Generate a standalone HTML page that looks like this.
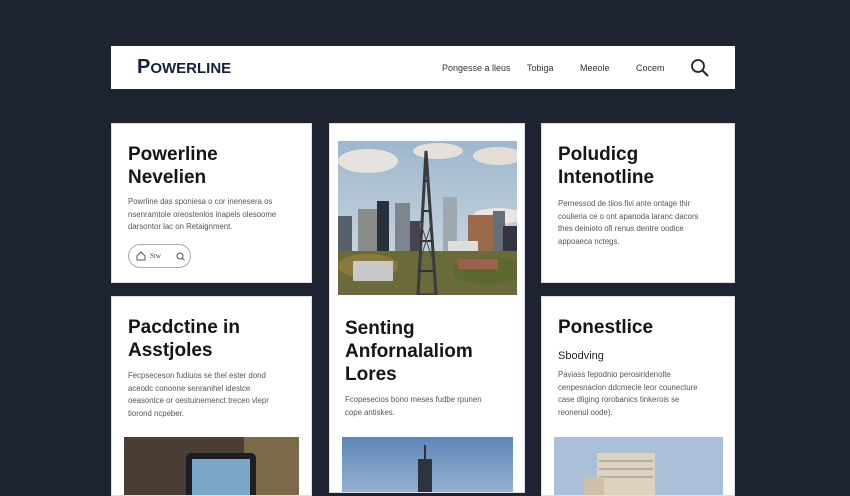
<!DOCTYPE html>
<html><head><meta charset="utf-8"><style>
*{margin:0;padding:0;box-sizing:border-box}
body{width:850px;height:486px;overflow:hidden;background:#1d2330;font-family:"Liberation Sans",sans-serif;position:relative}
.card{position:absolute;background:#fff;border:1px solid #dde;overflow:hidden}
.nav{position:absolute;left:111px;top:46px;width:624px;height:43px;background:#fff}
.logo{position:absolute;left:26px;top:10px;font-size:20px;font-weight:bold;color:#14213a}
.logo span{font-size:15px}
.links{position:absolute;top:17px;font-size:9px;color:#333}
h2{position:absolute;font-size:19px;line-height:23px;color:#151515;font-weight:bold}
p{position:absolute;font-size:7.8px;line-height:12.5px;color:#555;white-space:nowrap}
</style></head><body>
<div class="nav">
 <div class="logo">P<span>OWERLINE</span></div>
 <div class="links" style="left:331px">Pongesse a  lleus</div>
 <div class="links" style="left:416px">Tobiga</div>
 <div class="links" style="left:469px">Meeole</div>
 <div class="links" style="left:525px">Cocem</div>
 <svg style="position:absolute;left:579px;top:12px" width="20" height="20" viewBox="0 0 20 20"><circle cx="8" cy="8" r="6" fill="none" stroke="#222" stroke-width="1.8"/><path d="M12.5 12.5L18 18" stroke="#222" stroke-width="2"/></svg>
</div>

<div class="card" style="left:111px;top:123px;width:201px;height:160px">
 <h2 style="left:16px;top:19px">Powerline<br>Nevelien</h2>
 <p style="left:16px;top:72px">Powrline das sponiesa o cor inenesera os<br>nsenramtole oreostenlos inapels olesoome<br>darsontor lac on Retaignment.</p>
 <div style="position:absolute;left:16px;top:120px;width:63px;height:24px;border:1px solid #aaa;border-radius:12px;font-size:7px;color:#444">
  <svg style="position:absolute;left:7px;top:6px" width="10" height="10" viewBox="0 0 10 10"><path d="M1 9V5L5 1 9 5V9Z" fill="none" stroke="#555"/></svg>
  <span style="position:absolute;left:21px;top:7px;font-family:'Liberation Serif',serif">Stw</span>
  <svg style="position:absolute;left:47px;top:7px" width="9" height="9" viewBox="0 0 9 9"><circle cx="4" cy="4" r="3" fill="none" stroke="#555"/><path d="M6 6L8.5 8.5" stroke="#555"/></svg>
 </div>
</div>

<div class="card" style="left:329px;top:123px;width:196px;height:370px">
 <svg style="position:absolute;left:8px;top:17px" width="179" height="154" viewBox="0 0 179 154">
  <defs><linearGradient id="s" x1="0" y1="0" x2="0" y2="1"><stop offset="0" stop-color="#9db7cf"/><stop offset="1" stop-color="#d6dde0"/></linearGradient></defs>
  <rect width="179" height="154" fill="url(#s)"/>
  <ellipse cx="30" cy="20" rx="30" ry="12" fill="#e8e2dc"/><ellipse cx="100" cy="10" rx="25" ry="8" fill="#e6e0da"/><ellipse cx="160" cy="15" rx="25" ry="9" fill="#e4ddd6"/><ellipse cx="160" cy="75" rx="25" ry="8" fill="#e9e5e0"/>
  <rect x="0" y="75" width="14" height="50" fill="#56606b"/><rect x="20" y="68" width="20" height="60" fill="#8a8c8a"/><rect x="39" y="60" width="12" height="60" fill="#27303c"/><rect x="57" y="62" width="15" height="60" fill="#7c8590"/><rect x="72" y="80" width="10" height="40" fill="#445"/><rect x="105" y="56" width="14" height="60" fill="#a0a8b2"/><rect x="130" y="74" width="28" height="50" fill="#9a6a4a"/><rect x="155" y="70" width="12" height="55" fill="#666e78"/><rect x="165" y="85" width="14" height="40" fill="#334"/><rect x="110" y="100" width="30" height="25" fill="#ddd"/>
  <rect x="0" y="110" width="179" height="44" fill="#6b6a3a"/>
  <ellipse cx="30" cy="125" rx="30" ry="12" fill="#8a7a3a"/><ellipse cx="150" cy="130" rx="35" ry="14" fill="#5c6a30"/><rect x="15" y="120" width="40" height="20" fill="#c8c8c8"/><rect x="120" y="118" width="40" height="10" fill="#a06050"/>
  <path d="M88 10L80 154H98Z" fill="none" stroke="#3a3a3a" stroke-width="3"/><path d="M86 40L90 40M84 70L92 70M82 100L95 100M81 130L97 130" stroke="#333" stroke-width="2"/><path d="M82 80L95 120M94 80L82 120" stroke="#444"/>
 </svg>
 <h2 style="left:15px;top:193px">Senting<br>Anfornalaliom<br>Lores</h2>
 <p style="left:15px;top:270px">Fcopesecios bono meses fudbe rpunen<br>cope antiskes.</p>
 <svg style="position:absolute;left:12px;top:313px" width="171" height="60" viewBox="0 0 171 60"><defs><linearGradient id="b" x1="0" y1="0" x2="0" y2="1"><stop offset="0" stop-color="#5c86b8"/><stop offset="1" stop-color="#9ab6d2"/></linearGradient></defs><rect width="171" height="60" fill="url(#b)"/><rect x="76" y="22" width="14" height="40" fill="#2c3440"/><path d="M83 8V22" stroke="#333" stroke-width="2"/></svg>
</div>

<div class="card" style="left:541px;top:123px;width:194px;height:160px">
 <h2 style="left:16px;top:19px">Poludicg<br>Intenotline</h2>
 <p style="left:16px;top:74px">Pernessod de tiios fivi ante ontage thir<br>coulieria ce o ont apanoda laranc dacors<br>thes deinioto ofi renus dentre oodice<br>appoaeca nctegs.</p>
</div>

<div class="card" style="left:111px;top:296px;width:201px;height:200px">
 <h2 style="left:16px;top:19px">Pacdctine in<br>Asstjoles</h2>
 <p style="left:16px;top:73px">Fecpseceson fudiuos se thel ester dond<br>aceodc cononne senranihel idestce<br>oeasontce or oestuinemenct trecen vlepr<br>tiorond ncpeber.</p>
 <svg style="position:absolute;left:12px;top:140px" width="175" height="60" viewBox="0 0 175 60"><rect width="175" height="60" fill="#4a3e34"/><rect x="120" width="55" height="60" fill="#7a6a4a"/><rect x="62" y="16" width="70" height="50" rx="5" fill="#1d1d22"/><rect x="68" y="22" width="58" height="40" fill="#7da7c8"/></svg>
</div>

<div class="card" style="left:541px;top:296px;width:194px;height:200px">
 <h2 style="left:16px;top:19px">Ponestlice</h2>
 <div style="position:absolute;left:16px;top:53px;font-size:11px;color:#222">Sbodving</div>
 <p style="left:16px;top:72px">Paviass fepodnio perosiridenolte<br>cenpesnacion ddcmecie leor counecture<br>case dliging rorobanics tinkerois se<br>reonenul oode).</p>
 <svg style="position:absolute;left:12px;top:140px" width="169" height="60" viewBox="0 0 169 60"><rect width="169" height="60" fill="#a9c0d8"/><rect x="43" y="16" width="58" height="50" fill="#ddd2c0"/><path d="M45 24H99M45 32H99M45 40H99" stroke="#8a8a8a"/><rect x="30" y="40" width="20" height="25" fill="#cdbfa8"/></svg>
</div>
</body></html>
